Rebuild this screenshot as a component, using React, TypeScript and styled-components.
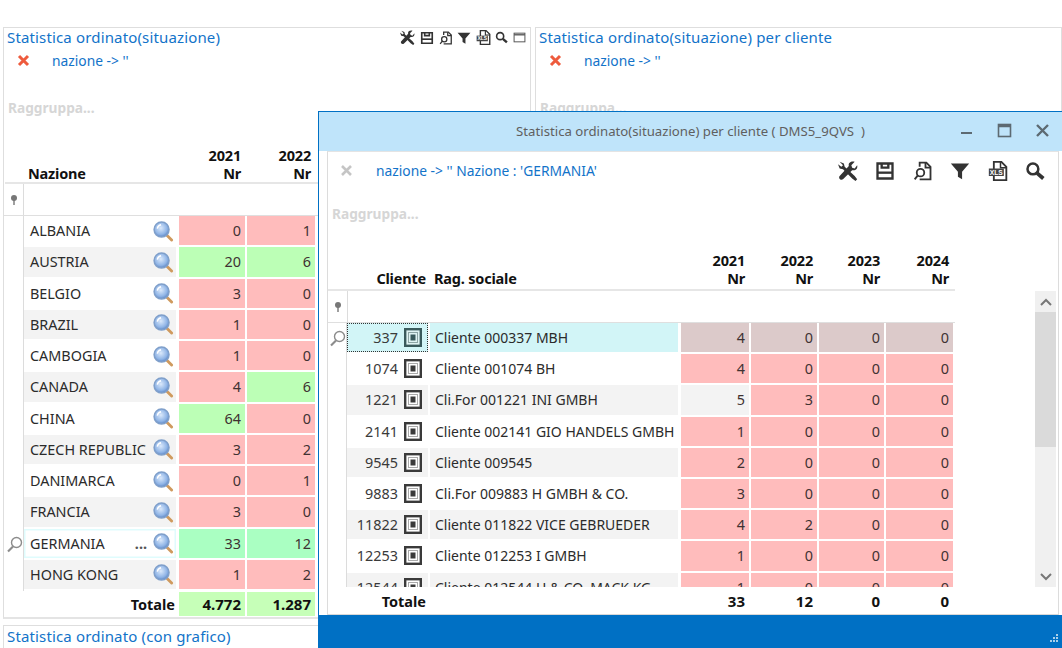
import React from "react";
import styled, { createGlobalStyle } from "styled-components";

const Global = createGlobalStyle`
  html, body { margin: 0; padding: 0; background: #fff; }
  body { font-family: "Noto Sans", "Open Sans", "Liberation Sans", sans-serif; color: #222; }
  #root { width: 1062px; height: 648px; }
`;

const Desktop = styled.div`
  position: relative; width: 1062px; height: 648px; overflow: hidden; background: #fff;
  display: flex; flex-direction: column; padding: 27px 0 0 3px; box-sizing: border-box;
`;
const TopRow = styled.div`display: flex; gap: 4px; height: 592px; flex: none;`;
const Panel = styled.section<{ $w: number }>`
  width: ${p => p.$w}px; flex: none; box-sizing: border-box; position: relative;
  border: 1px solid #dedede; border-bottom-width: 2px; border-bottom-color: #e4e4e4; background: #fff;
  display: flex; flex-direction: column; overflow: hidden;
`;
const BottomPanel = styled.section`
  margin-top: 6px; height: 40px; width: 527px; box-sizing: border-box;
  border: 1px solid #dedede; border-bottom: none; padding: 1px 0 0 3px;
`;
const PanelHead = styled.div`display: flex; align-items: center; justify-content: space-between; height: 19px; padding: 0 3px 0 3px;`;
const PanelTitle = styled.div`font-size: 15px; letter-spacing: 0.15px; color: #1273c9; line-height: 19px; white-space: nowrap;`;
const MiniTools = styled.div`display: flex; gap: 4.6px; align-items: center; color: #333; margin-right: 1px;`;
const FilterLine = styled.div`display: flex; align-items: center; height: 24px; padding-left: 13px; margin-top: 1px; gap: 22px;`;
const FilterText = styled.span`font-size: 13.8px; color: #1273c9; white-space: pre;`;
const GroupHint = styled.div<{ $top: number; $left: number }>`
  margin-top: ${p => p.$top}px; margin-left: ${p => p.$left}px; height: 20px; line-height: 20px;
  font-size: 13.7px; font-weight: 700; color: #d6d6d6;
`;

const Grid = styled.div<{ $cols: string; $left: number }>`
  display: grid; grid-template-columns: ${p => p.$cols}; margin-left: ${p => p.$left}px; column-gap: 0;
`;
const HeadCell = styled.div<{ $align?: string }>`
  font-size: 14.5px; font-weight: 700; letter-spacing: -0.2px; line-height: 18px; color: #111; text-align: ${p => p.$align ?? "left"};
  align-self: end; padding: 0 ${p => (p.$align === "right" ? 6 : 4)}px 0 4px; white-space: nowrap;
`;
const ClientHead = styled(HeadCell)`padding-right: 4px;`;
const HeaderRow = styled(Grid)<{ $h: number; $pb: number }>`
  height: ${p => p.$h}px; border-bottom: 2px solid #e6e6e6; box-sizing: border-box; padding-bottom: ${p => p.$pb}px;
`;
const FilterRow = styled.div<{ $h: number }>`
  height: ${p => p.$h}px; border-bottom: 1px solid #dfdfdf; box-sizing: border-box; display: flex;
`;
const PinCell = styled.div<{ $w: number }>`
  width: ${p => p.$w}px; flex: none; height: 100%; box-sizing: border-box; border-right: 1px solid #dcdcdc;
  display: flex; align-items: center; justify-content: center; color: #777;
`;
const Rows = styled.div<{ $h: number }>`height: ${p => p.$h}px; overflow: hidden;`;
const Row = styled(Grid)<{ $h: number }>`height: ${p => p.$h}px;`;
const Indicator = styled.div`
  border-right: 1px solid #dcdcdc; display: flex; align-items: center; justify-content: center; color: #888;
`;
const NameCell = styled.div<{ $zebra: boolean; $active?: boolean }>`
  background: ${p => (p.$active ? "#fff" : p.$zebra ? "#f3f3f3" : "#fff")};
  ${p => p.$active ? "box-shadow: inset 0 0 0 1.5px #dffcfd;" : ""}
  margin-bottom: 2px; font-size: 14.4px; display: flex; align-items: center;
  padding: 0 2px 0 6px; color: #2b2b2b; white-space: nowrap; overflow: hidden; margin-right: 3px;
`;
const Ellipsis = styled.span`margin-left: auto; margin-right: 5px; font-weight: 700; color: #555;`;
const NameGap = styled.span`margin-left: auto;`;
const ValueCell = styled.div<{ $bg: string }>`
  background: ${p => p.$bg}; margin: 0 2px 2px 0; font-size: 14.4px;
  display: flex; align-items: center; justify-content: flex-end; padding-right: 4px; color: #3f3232;
`;
const TotalRow = styled(Grid)<{ $h: number }>`height: ${p => p.$h}px;`;
const TotalLabel = styled.div<{ $align?: string }>`
  font-size: 14.5px; font-weight: 700; color: #111; display: flex; align-items: center;
  justify-content: ${p => p.$align ?? "flex-end"}; padding-right: 4px; white-space: nowrap;
`;
const TotalValue = styled.div<{ $bg?: string }>`
  background: ${p => p.$bg ?? "transparent"}; margin-right: 2px; font-size: 15px; font-weight: 700;
  display: flex; align-items: center; justify-content: flex-end; padding-right: 4px; color: #111;
`;
const Spacer = styled.div``;

const Win = styled.div`
  position: absolute; left: 318px; top: 111px; width: 744px; height: 537px; box-sizing: border-box;
  border-left: 1px solid #0070c4; border-top: 1px solid #0070c4; background: #fff;
  display: flex; flex-direction: column;
`;
const TitleBar = styled.div`
  height: 39px; flex: none; background: #bfe4fa; display: flex; align-items: center; justify-content: center;
  position: relative; font-size: 13.2px; color: #5f5f5f; white-space: pre; padding-bottom: 2px; box-sizing: border-box;
`;
const WinControls = styled.div`
  position: absolute; right: 9px; top: 9px; display: flex; gap: 18px; color: #5d6a72;
`;
const WinBody = styled.div`
  flex: 1; min-height: 0; margin: 0 3px 0 8px; border-left: 1px solid #dcdcdc; border-right: 1px solid #dcdcdc;
  border-bottom: 1px solid #d8d8d8; display: flex; flex-direction: column; border-top: 1px solid #e4e4e4;
`;
const WinToolbar = styled.div`display: flex; align-items: center; height: 36px; flex: none; padding-left: 12px;`;
const WinX = styled.div`color: #c5c5c5; display: flex; width: 36px; flex: none;`;
const WinTools = styled.div`margin: 2px 13px 0 auto; display: flex; gap: 17.4px; color: #333;`;
const GridLine = styled.div`display: flex; flex: 1; min-height: 0; margin-top: 4px;`;
const GridColumn = styled.div`width: 627px; flex: none;`;
const Scrollbar = styled.div`
  width: 21px; height: 296px; margin: 63px 2px 0 auto; background: #f0f0f0; display: flex; flex-direction: column; color: #777;
`;
const ScrollButton = styled.div`height: 21px; display: flex; align-items: center; justify-content: center; flex: none;`;
const ScrollThumb = styled.div`height: 135px; background: #dadada; flex: none;`;
const ScrollGap = styled.div`flex: 1;`;
const StatusBar = styled.div`
  height: 33px; flex: none; background: #0070c4; display: flex; align-items: flex-end; justify-content: flex-end; padding: 0 3px 4px 0; box-sizing: border-box;
`;
const NumberCell = styled.div<{ $zebra: boolean; $active?: boolean }>`
  background: ${p => (p.$active ? "#d2f5f7" : p.$zebra ? "#f3f3f3" : "#fff")};
  ${p => p.$active ? "outline: 1px dotted #333; outline-offset: -1px;" : ""}
  margin-bottom: 2px; margin-right: 2px; display: flex; align-items: center; justify-content: flex-end; gap: 6px; padding-right: 6px;
  font-size: 14.4px; color: #3a3a3a;
`;
const ClientCell = styled.div<{ $zebra: boolean; $active?: boolean }>`
  background: ${p => (p.$active ? "#d2f5f7" : p.$zebra ? "#f3f3f3" : "#fff")};
  margin: 0 3px 2px 0; display: flex; align-items: center; padding-left: 5px;
  font-size: 14px; color: #2b2b2b; white-space: nowrap; overflow: hidden;
`;

const Wrench = ({ s }: { s: number }) => (
  <svg width={s} height={s} viewBox="0 0 24 24" fill="currentColor">
    <path d="M2 1l5 2 1 4 12 11 3 4-2 2-4-3L6 10 2 9 0 4l4 3 2-2z" />
    <path d="M23 5l-3 4-3-1-1-3 4-4c-4-1-8 1-7 5L2 18c-2 2 1 6 4 4L17 11c4 1 7-2 6-6z" />
  </svg>
);
const Floppy = ({ s }: { s: number }) => (
  <svg width={s} height={s} viewBox="0 0 24 24" fill="none" stroke="currentColor" strokeWidth="2.800">
    <path d="M3 3h18v18H3z" /><path d="M8 3v5h8V3" /><path d="M3 14h18" />
  </svg>
);
const DocFind = ({ s }: { s: number }) => (
  <svg width={s} height={s} viewBox="0 0 24 24" fill="none" stroke="currentColor" strokeWidth="2.200">
    <path d="M8 7V2h8l5 5v15H8" /><path d="M15 2v6h6" />
    <circle cx="9" cy="14" r="4.500" /><path d="M6 17l-4 5" />
  </svg>
);
const Funnel = ({ s }: { s: number }) => (
  <svg width={s} height={s} viewBox="0 0 24 24" fill="currentColor"><path d="M1 3h22l-8.500 10v9l-5-3v-6z" /></svg>
);
const XlsDoc = ({ s }: { s: number }) => (
  <svg width={s} height={s} viewBox="0 0 24 24">
    <path d="M7 1h9l6 6v16H7z" fill="none" stroke="currentColor" strokeWidth="2.200" />
    <path d="M15 1v7h7" fill="none" stroke="currentColor" strokeWidth="1.800" />
    <rect x="1" y="9" width="18" height="9" fill="#444" />
    <text x="10" y="16.500" fontSize="8" fontWeight="700" textAnchor="middle" fill="#fff" fontFamily="Liberation Sans, sans-serif">XLS</text>
  </svg>
);
const Search = ({ s }: { s: number }) => (
  <svg width={s} height={s} viewBox="0 0 24 24" fill="none" stroke="currentColor">
    <circle cx="9.500" cy="9.500" r="6.500" strokeWidth="3" /><path d="M14.500 14.500L22 21" strokeWidth="4.500" />
  </svg>
);
const Restore = ({ s }: { s: number }) => (
  <svg width={s} height={s} viewBox="0 0 24 24" fill="none" stroke="#555" strokeWidth="1.800">
    <rect x="2" y="4" width="20" height="16" /><path d="M2 7h20" strokeWidth="2.500" />
  </svg>
);
const RedX = () => (
  <svg width="13" height="13" viewBox="0 0 13 13" fill="none" stroke="#ee5b3d" strokeWidth="3">
    <path d="M2 2l9 9M11 2l-9 9" />
  </svg>
);
const GreyX = () => (
  <svg width="13" height="13" viewBox="0 0 13 13" fill="none" stroke="currentColor" strokeWidth="2.600">
    <path d="M2 2l9 9M11 2l-9 9" />
  </svg>
);
const Pin = () => (
  <svg width="8" height="10" viewBox="0 0 8 10" fill="currentColor">
    <circle cx="4" cy="3" r="3" /><rect x="3.300" y="5" width="1.400" height="5" />
  </svg>
);
const GhostLens = () => (
  <svg width="17" height="17" viewBox="0 0 17 17" fill="none" stroke="#8c8c8c">
    <circle cx="10.500" cy="6.500" r="5" strokeWidth="1.400" fill="#fff" />
    <path d="M7 10.500l-5 5" strokeWidth="2.200" />
  </svg>
);
const BlueLens = () => (
  <svg width="22" height="22" viewBox="0 0 23 23" style={{ flex: "none" }}>
    <defs>
      <radialGradient id="lensFill" cx="45%" cy="40%" r="60%">
        <stop offset="0%" stopColor="#dbe9fb" /><stop offset="70%" stopColor="#8fb4e6" /><stop offset="100%" stopColor="#5f87c5" />
      </radialGradient>
    </defs>
    <path d="M14.500 15l6 6" stroke="#cf9a5e" strokeWidth="3" strokeLinecap="round" />
    <circle cx="10" cy="10" r="7.800" fill="url(#lensFill)" stroke="#7f9fca" strokeWidth="1.600" />
    <path d="M5.500 9a5 5 0 0 1 4-4" stroke="#fff" strokeWidth="1.500" fill="none" />
  </svg>
);
const RecordIcon = ({ active }: { active?: boolean }) => (
  <svg width="18" height="19" viewBox="0 0 18 19" style={{ flex: "none" }}>
    <rect x="1.200" y="1.200" width="15.600" height="16.600" fill={active ? "#dff3f3" : "#fff"} stroke={active ? "#3a5a5c" : "#3a3a3a"} strokeWidth="2.400" />
    <rect x="4.500" y="4.500" width="9" height="10" fill="none" stroke={active ? "#8da5a5" : "#aaa"} strokeWidth="1" />
    <rect x="6.500" y="6.500" width="5" height="6" fill={active ? "#3a5a5c" : "#3a3a3a"} />
  </svg>
);

const R = "#ffbcbc", G = "#bcffb6", G2 = "#aaffc2", TG = "#c6ffb8";
type N = { name: string; a: number; b: number; ga?: boolean; gb?: boolean; active?: boolean };
const nations: N[] = [
  { name: "ALBANIA", a: 0, b: 1 },
  { name: "AUSTRIA", a: 20, b: 6, ga: true, gb: true },
  { name: "BELGIO", a: 3, b: 0 },
  { name: "BRAZIL", a: 1, b: 0 },
  { name: "CAMBOGIA", a: 1, b: 0 },
  { name: "CANADA", a: 4, b: 6, gb: true },
  { name: "CHINA", a: 64, b: 0, ga: true },
  { name: "CZECH REPUBLIC", a: 3, b: 2 },
  { name: "DANIMARCA", a: 0, b: 1 },
  { name: "FRANCIA", a: 3, b: 0 },
  { name: "GERMANIA", a: 33, b: 12, active: true },
  { name: "HONG KONG", a: 1, b: 2 },
];
type C = { id: number; name: string; v: number[]; plain?: boolean };
const clients: C[] = [
  { id: 337, name: "Cliente 000337 MBH", v: [4, 0, 0, 0] },
  { id: 1074, name: "Cliente 001074 BH", v: [4, 0, 0, 0] },
  { id: 1221, name: "Cli.For 001221 INI GMBH", v: [5, 3, 0, 0], plain: true },
  { id: 2141, name: "Cliente 002141 GIO HANDELS GMBH", v: [1, 0, 0, 0] },
  { id: 9545, name: "Cliente 009545", v: [2, 0, 0, 0] },
  { id: 9883, name: "Cli.For 009883 H GMBH & CO.", v: [3, 0, 0, 0] },
  { id: 11822, name: "Cliente 011822 VICE GEBRUEDER", v: [4, 2, 0, 0] },
  { id: 12253, name: "Cliente 012253 I GMBH", v: [1, 0, 0, 0] },
  { id: 12544, name: "Cliente 012544 H & CO. MACK KG", v: [1, 0, 0, 0] },
];

const LEFT_COLS = "19px 155px 68px 70px";
const WIN_COLS = "19px 83px 251px 70px 68px 67px 69px";

export default function App() {
  return (
    <Desktop>
      <Global />
      <TopRow>
        <Panel $w={528}>
          <PanelHead>
            <PanelTitle>Statistica ordinato(situazione)</PanelTitle>
            <MiniTools>
              <Wrench s={15} /><Floppy s={14} /><DocFind s={14} /><Funnel s={14} /><XlsDoc s={15} /><Search s={13} /><Restore s={13} />
            </MiniTools>
          </PanelHead>
          <FilterLine><RedX /><FilterText>nazione -&gt; ''</FilterText></FilterLine>
          <GroupHint $top={26} $left={4}>Raggruppa...</GroupHint>
          <HeaderRow $cols={LEFT_COLS} $left={1} $h={66} $pb={0}>
            <Spacer />
            <HeadCell>Nazione</HeadCell>
            <HeadCell $align="right">2021<br />Nr</HeadCell>
            <HeadCell $align="right">2022<br />Nr</HeadCell>
          </HeaderRow>
          <FilterRow $h={32}><PinCell $w={20}><Pin /></PinCell></FilterRow>
          <Rows $h={375.500}>
            {nations.map((n, i) => (
              <Row key={n.name} $cols={LEFT_COLS} $left={1} $h={31.250}>
                <Indicator>{n.active && <GhostLens />}</Indicator>
                <NameCell $zebra={i % 2 === 1} $active={n.active}>
                  {n.name}
                  {n.active ? <Ellipsis>...</Ellipsis> : <NameGap />}
                  <BlueLens />
                </NameCell>
                <ValueCell $bg={n.active ? G2 : n.ga ? G : R}>{n.a}</ValueCell>
                <ValueCell $bg={n.active ? G2 : n.gb ? G : R}>{n.b}</ValueCell>
              </Row>
            ))}
          </Rows>
          <TotalRow $cols={LEFT_COLS} $left={1} $h={24}>
            <Spacer />
            <TotalLabel>Totale</TotalLabel>
            <TotalValue $bg={TG}>4.772</TotalValue>
            <TotalValue $bg={TG}>1.287</TotalValue>
          </TotalRow>
        </Panel>
        <Panel $w={527}>
          <PanelHead><PanelTitle>Statistica ordinato(situazione) per cliente</PanelTitle></PanelHead>
          <FilterLine><RedX /><FilterText>nazione -&gt; ''</FilterText></FilterLine>
          <GroupHint $top={26} $left={4}>Raggruppa...</GroupHint>
        </Panel>
      </TopRow>
      <BottomPanel>
        <PanelTitle>Statistica ordinato (con grafico)</PanelTitle>
      </BottomPanel>

      <Win>
        <TitleBar>
          Statistica ordinato(situazione) per cliente ( DMS5_9QVS  )
          <WinControls>
            <svg width="20" height="20" viewBox="0 0 20 20"><rect x="4" y="11" width="11" height="2" fill="currentColor" /></svg>
            <svg width="20" height="20" viewBox="0 0 20 20" fill="none" stroke="currentColor" strokeWidth="1.600"><rect x="3.500" y="3.500" width="12" height="12" /><path d="M3 5h13" strokeWidth="2.500" /></svg>
            <svg width="20" height="20" viewBox="0 0 20 20" fill="none" stroke="currentColor" strokeWidth="2.400"><path d="M4 4l11 11M15 4L4 15" /></svg>
          </WinControls>
        </TitleBar>
        <WinBody>
          <WinToolbar>
            <WinX><GreyX /></WinX>
            <FilterText>nazione -&gt; '' Nazione : 'GERMANIA'</FilterText>
            <WinTools>
              <Wrench s={20} /><Floppy s={20} /><DocFind s={20} /><Funnel s={20} /><XlsDoc s={20} /><Search s={20} />
            </WinTools>
          </WinToolbar>
          <GroupHint $top={16} $left={4}>Raggruppa...</GroupHint>
          <GridLine>
            <GridColumn>
              <HeaderRow $cols={WIN_COLS} $left={0} $h={63} $pb={2}>
                <Spacer />
                <ClientHead $align="right">Cliente</ClientHead>
                <HeadCell>Rag. sociale</HeadCell>
                <HeadCell $align="right">2021<br />Nr</HeadCell>
                <HeadCell $align="right">2022<br />Nr</HeadCell>
                <HeadCell $align="right">2023<br />Nr</HeadCell>
                <HeadCell $align="right">2024<br />Nr</HeadCell>
              </HeaderRow>
              <FilterRow $h={32}><PinCell $w={20}><Pin /></PinCell></FilterRow>
              <Rows $h={264}>
                {clients.map((c, i) => (
                  <Row key={c.id} $cols={WIN_COLS} $left={0} $h={31.200}>
                    <Indicator>{i === 0 && <GhostLens />}</Indicator>
                    <NumberCell $zebra={i % 2 === 0 && i > 0} $active={i === 0}>{c.id}<RecordIcon active={i === 0} /></NumberCell>
                    <ClientCell $zebra={i % 2 === 0 && i > 0} $active={i === 0}>{c.name}</ClientCell>
                    {c.v.map((v, j) => (
                      <ValueCell key={j} $bg={i === 0 ? "#dccaca" : c.plain && j === 0 ? "#f3f3f3" : R}>{v}</ValueCell>
                    ))}
                  </Row>
                ))}
              </Rows>
              <TotalRow $cols={WIN_COLS} $left={0} $h={27}>
                <Spacer />
                <TotalLabel>Totale</TotalLabel>
                <Spacer />
                <TotalValue>33</TotalValue>
                <TotalValue>12</TotalValue>
                <TotalValue>0</TotalValue>
                <TotalValue>0</TotalValue>
              </TotalRow>
            </GridColumn>
            <Scrollbar>
              <ScrollButton><svg width="12" height="8" viewBox="0 0 12 8" fill="none" stroke="currentColor" strokeWidth="2"><path d="M1 7l5-5 5 5" /></svg></ScrollButton>
              <ScrollThumb />
              <ScrollGap />
              <ScrollButton><svg width="12" height="8" viewBox="0 0 12 8" fill="none" stroke="currentColor" strokeWidth="2"><path d="M1 1l5 5 5-5" /></svg></ScrollButton>
            </Scrollbar>
          </GridLine>
        </WinBody>
        <StatusBar>
          <svg width="11" height="11" viewBox="0 0 11 11" fill="#a9cfe9">
            <rect x="8" y="1" width="2" height="2" /><rect x="5" y="4" width="2" height="2" /><rect x="8" y="4" width="2" height="2" />
            <rect x="2" y="7" width="2" height="2" /><rect x="5" y="7" width="2" height="2" /><rect x="8" y="7" width="2" height="2" />
          </svg>
        </StatusBar>
      </Win>
    </Desktop>
  );
}
